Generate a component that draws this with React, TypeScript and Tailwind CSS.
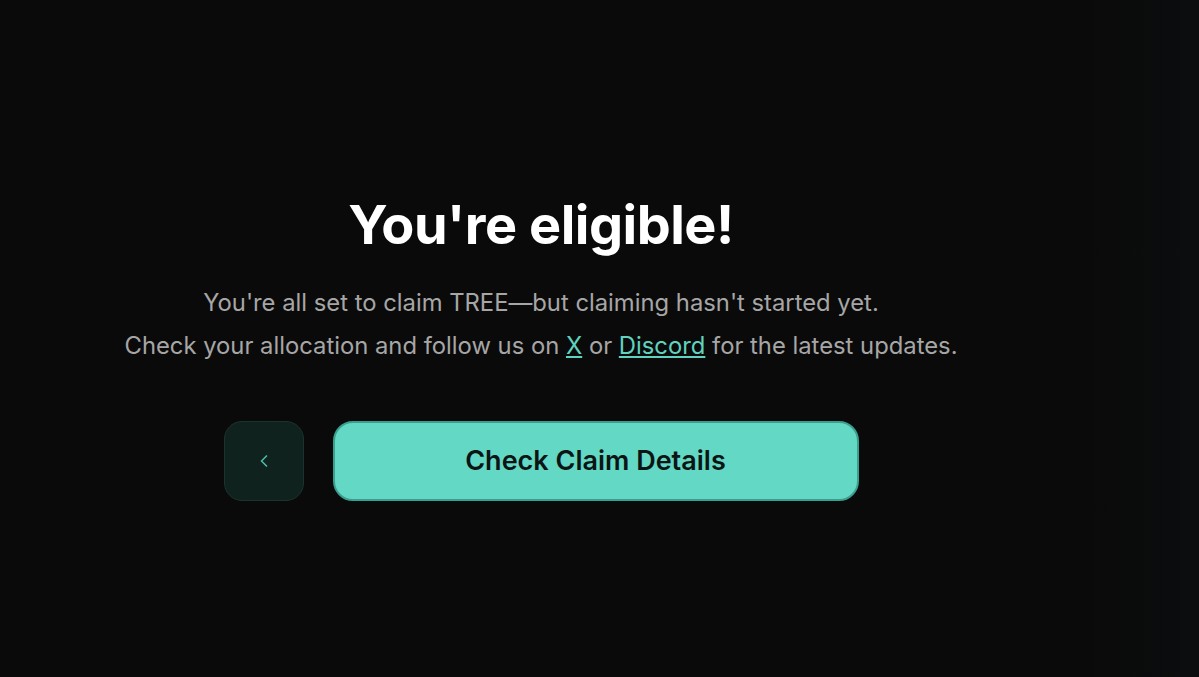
import { ChevronLeft } from 'lucide-react'

export default function App() {
  return (
    <div
      className="flex h-[677px] w-full overflow-hidden bg-[#0a0a0a] text-white"
      style={{ fontFamily: 'Inter, "Noto Sans", sans-serif' }}
    >
      {/* Main */}
      <div className="flex flex-1 flex-col items-center pt-[189px]">
        <h1 className="text-[54px] font-bold leading-[72px] tracking-[-0.5px] text-white">You're eligible!</h1>

        <div className="mt-[20px] flex flex-col items-center text-[23.8px] leading-[43px] text-[#a6a6a6]">
          <p>You're all set to claim TREE—but claiming hasn't started yet.</p>
          <p>
            Check your allocation and follow us on{' '}
            <a href="#" className="text-[#5fd3bf] underline underline-offset-2">X</a> or{' '}
            <a href="#" className="text-[#5fd3bf] underline underline-offset-2">Discord</a> for the latest updates.
          </p>
        </div>

        <div className="mt-[54px] flex items-center gap-[29px]">
          <button className="flex h-[80px] w-[80px] items-center justify-center rounded-[18px] border border-[#1b332e] bg-[#0f221e] text-[#4fb9a6]">
            <ChevronLeft size={20} strokeWidth={2} />
          </button>
          <button className="flex h-[80px] w-[526px] items-center justify-center rounded-[20px] border-2 border-[#3a9f8e] bg-[#63d8c4] text-[27px] font-semibold text-[#0b1614]">
            Check Claim Details
          </button>
        </div>
      </div>

      {/* Side */}
      <div className="w-[117px] bg-gradient-to-l from-[#0b0d0e] to-[#0a0a0a]" />
    </div>
  )
}
